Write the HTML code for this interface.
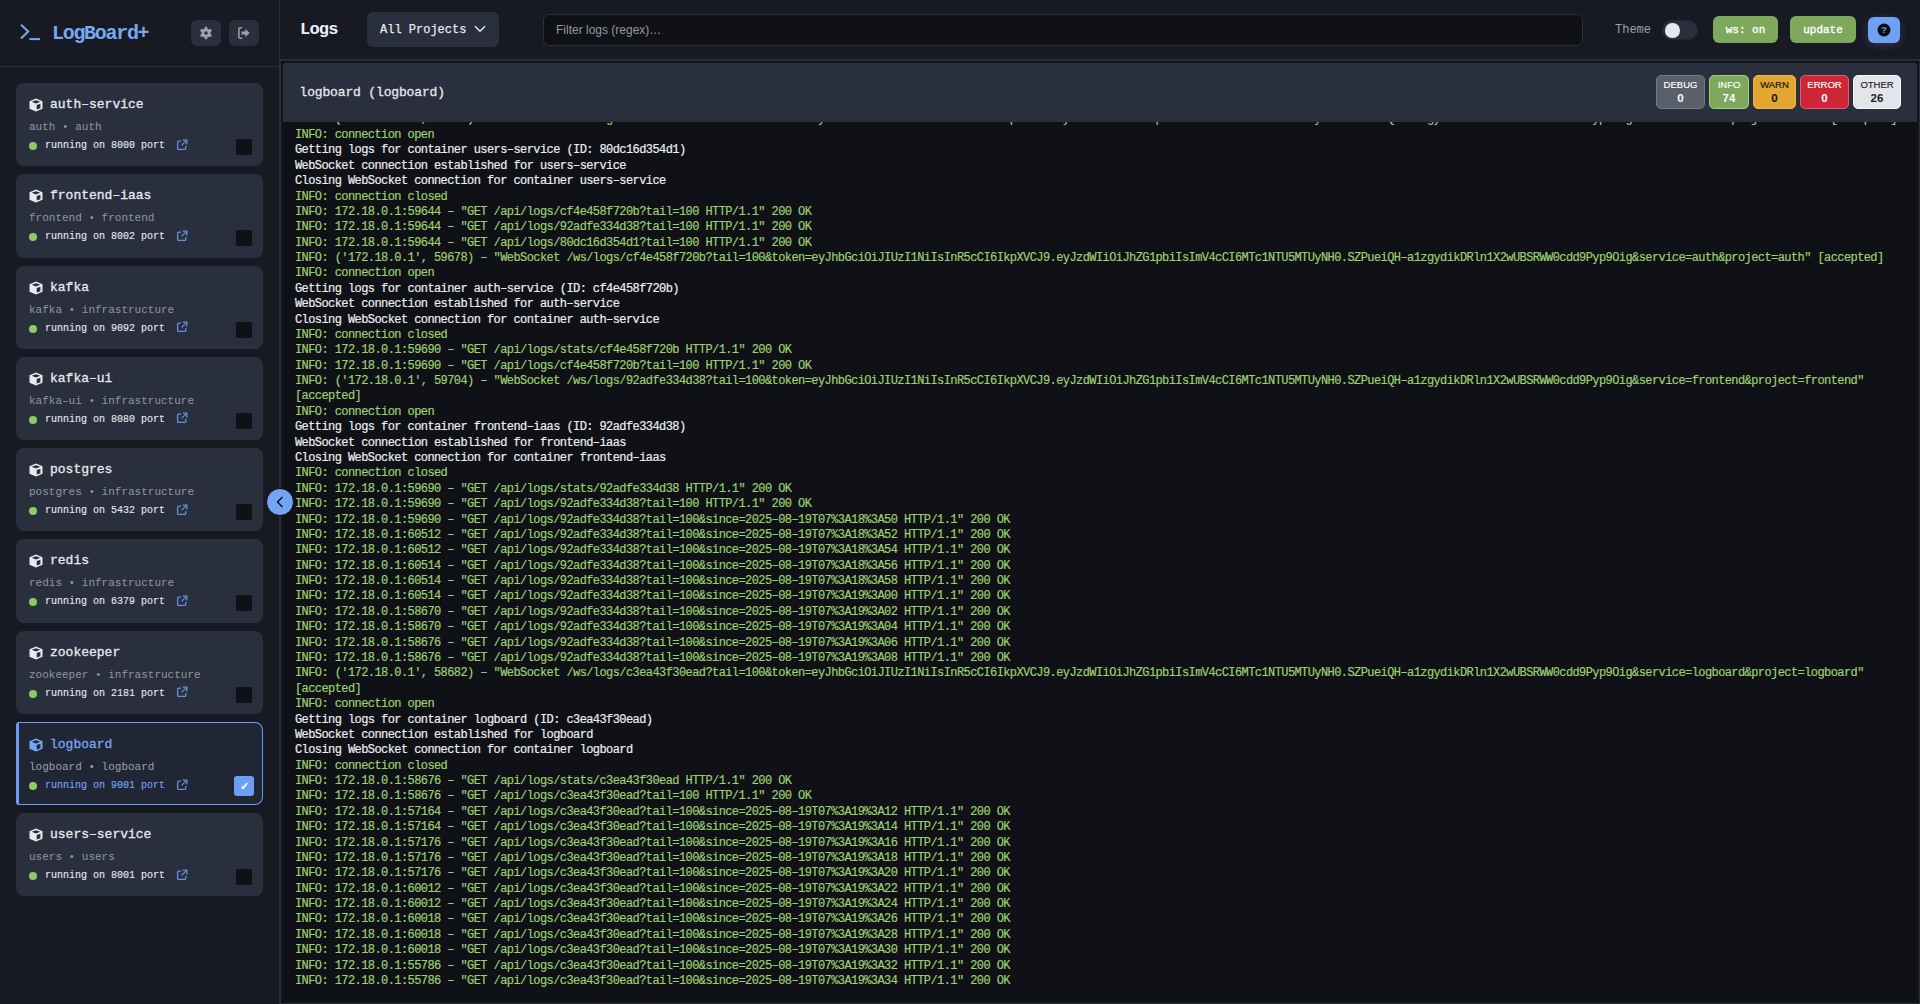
<!DOCTYPE html>
<html><head><meta charset="utf-8"><title>LogBoard+</title>
<style>
*{box-sizing:border-box;margin:0;padding:0}
html,body{width:1920px;height:1004px;overflow:hidden;background:#171a22;font-family:"Liberation Mono",monospace;color:#e6e8ec}
.sb{position:absolute;left:0;top:0;width:280px;height:1004px;background:#171a22;border-right:1px solid #2a2e39}
.sbh{position:absolute;left:0;top:0;width:279px;height:67px;border-bottom:1px solid #2a2e39}
.logo{position:absolute;left:20px;top:24px;width:21px;height:17px}
.brand{position:absolute;left:52px;top:22.5px;font-size:20px;letter-spacing:-1.3px;font-weight:bold;color:#78a8f2;line-height:22px}
.ib{position:absolute;top:20px;width:30px;height:26px;background:#2a2f3d;border-radius:6px}
.ib svg{position:absolute;left:8px;top:6px}
.card{position:absolute;left:16px;width:247px;height:83.4px;background:#2a2f3d;border-radius:8px;--cbg:#2a2f3d}
.card.sel{background:#212635;border:1px solid #6b9cf0;border-left:3px solid #6b9cf0;border-radius:3px 8px 8px 3px;--cbg:#212635}
.ct{position:absolute;left:13px;top:13px;height:18px;font-size:13px;font-weight:normal;-webkit-text-stroke:0.3px currentColor;line-height:18px;color:#e8eaee;white-space:nowrap}
.cube{position:absolute;left:-0.5px;top:2px;color:#e8eaee}
.ct span{position:absolute;left:21px;top:0}
.cs{position:absolute;left:13px;top:36px;font-size:11px;line-height:16px;color:#9096a1;white-space:nowrap}
.cr{position:absolute;left:13px;top:55px;height:15px;font-size:10px;font-weight:normal;-webkit-text-stroke:0.1px currentColor;line-height:15px;color:#e8eaee;white-space:nowrap}
.dot{position:absolute;left:-0.5px;top:4px;width:8px;height:8px;border-radius:50%;background:#8ecb66}
.rt{position:absolute;left:16px;top:0}
.ext{position:absolute;left:147px;top:0.5px;color:#5f92dc}
.chk{position:absolute;left:220px;top:56px;width:16px;height:16px;border-radius:2px;background:#0f1116}
.card.sel .ct,.card.sel .cube,.card.sel .cr{color:#76a6f4}
.card.sel .cs{color:#9aa0aa}
.card.sel .ct{left:10px;top:13px}.card.sel .cs{left:10px;top:36px}.card.sel .cr{left:10px;top:55.5px}.card.sel .chk{left:215px;top:53px}
.chk.on{background:#6c9ff2;color:#fff;font-size:11px;font-weight:bold;text-align:center;line-height:16px;font-family:"Liberation Sans",sans-serif;border-radius:3px;width:20px;height:20px;line-height:20px}
.main{position:absolute;left:280px;top:0;width:1640px;height:1004px}
.mh{position:absolute;left:0;top:0;width:1640px;height:60px;border-bottom:1px solid #2a2e39;background:#171a22}
.title{position:absolute;left:20px;top:19px;font-size:17px;letter-spacing:-0.8px;font-weight:bold;line-height:22px;color:#eef0f3}
.dd{position:absolute;left:87px;top:12px;width:132px;height:35px;background:#2a2f3d;border-radius:6px;font-size:12px;line-height:36px;color:#e6e8ec;padding-left:13px;white-space:nowrap;-webkit-text-stroke:0.25px currentColor}
.dd svg{position:absolute;left:107px;top:13px}
.filter{position:absolute;left:263px;top:14px;width:1040px;height:32px;background:#0f1116;border:1px solid #2a2e39;border-radius:6px;font-family:"Liberation Sans",sans-serif;font-size:12px;line-height:30px;color:#9299a4;padding-left:12px}
.theme{position:absolute;left:1335px;top:21px;font-size:12px;line-height:18px;color:#9aa0ab}
.tog{position:absolute;left:1382px;top:20px;width:36px;height:20px;border-radius:10px;background:#2a2f3d;border:1px solid #22262f}
.tog i{position:absolute;left:2px;top:2px;width:14.5px;height:14.5px;border-radius:50%;background:#e5e7ec}
.btn{position:absolute;top:16px;height:27px;background:#7ea85c;border-radius:6px;color:#fff;font-size:11px;font-weight:normal;-webkit-text-stroke:0.35px currentColor;line-height:28.5px;text-align:center}
.help{position:absolute;left:1588px;top:17px;width:32px;height:26px;background:#6fa1f3;border-radius:6px;box-shadow:0 2px 8px rgba(110,100,210,0.35)}
.help svg{position:absolute;left:9px;top:5.5px}
.panel{position:absolute;left:280px;top:60px;width:1640px;height:944px;border:1px solid #2a2e38;background:#0a0b0e}
.pin{position:absolute;left:0;top:0;right:0;bottom:0;border:2px solid #13161d;border-radius:5px;background:#0f1116;overflow:hidden}
.ph{position:absolute;left:0;top:0;width:100%;height:59px;background:#2a2f3e;z-index:2}
.pt{position:absolute;left:16.5px;top:20.5px;font-size:13px;letter-spacing:-0.15px;line-height:18px;color:#e6e8ec;-webkit-text-stroke:0.3px currentColor}
.badge{position:absolute;top:12px;height:34px;border-radius:5px;border:1px solid;font-family:"Liberation Sans",sans-serif;text-align:center}
.badge b{display:block;font-size:9.5px;font-weight:normal;-webkit-text-stroke:0.15px currentColor;line-height:11px;margin-top:2.5px}
.badge u{display:block;text-decoration:none;font-size:11.5px;font-weight:bold;line-height:14px;margin-top:1.5px}
.logs{position:absolute;left:12px;top:0;width:1614px;font-size:12px;letter-spacing:-0.582px;line-height:15px;z-index:1;-webkit-text-stroke:0.2px currentColor}
.logs div{position:absolute;left:0;white-space:pre;height:15px}
.logs .g{color:#9ccf72}
.logs .w{color:#eceef1}
.knob{position:absolute;left:266px;top:488px;width:28px;height:28px;border-radius:50%;background:#74a5f3;border:1px solid #0f1116;z-index:5}
.knob svg{position:absolute;left:9px;top:7px}
</style></head><body>
<div class="sb">
  <div class="sbh">
    <svg class="logo" viewBox="0 0 21 17" width="21" height="17"><path d="M1 0.8 L8.2 7.6 L1 14.4" fill="none" stroke="#78a8f2" stroke-width="2"/><path d="M9.4 15.1 H20" stroke="#78a8f2" stroke-width="2"/></svg>
    <div class="brand">LogBoard+</div>
    <div class="ib" style="left:191px"><svg viewBox="0 0 14 14" width="14" height="14"><g fill="#9ea4b1"><circle cx="7" cy="7" r="4.6"/><rect x="5.7" y="0.8" width="2.6" height="12.4" rx="0.6"/><rect x="5.7" y="0.8" width="2.6" height="12.4" rx="0.6" transform="rotate(60 7 7)"/><rect x="5.7" y="0.8" width="2.6" height="12.4" rx="0.6" transform="rotate(120 7 7)"/></g><circle cx="7" cy="7" r="1.7" fill="#2a2f3d"/></svg></div>
    <div class="ib" style="left:229px"><svg viewBox="0 0 14 14" width="14" height="14"><path d="M4.6 1.8 H3.2 Q1.9 1.8 1.9 3.1 V10.9 Q1.9 12.2 3.2 12.2 H4.6" fill="none" stroke="#9ea4b1" stroke-width="1.5" stroke-linecap="round"/><path d="M4.6 5.6 H8.4 V3 L12.6 7 L8.4 11 V8.4 H4.6 Z" fill="#9ea4b1"/></svg></div>
  </div>
<div class="card" style="top:83.0px">
<div class="ct"><svg class="cube" viewBox="0 0 14 14" width="14" height="14"><path d="M7 0.5 L13.5 3.3 V10.7 L7 13.5 L0.5 10.7 V3.3 Z" fill="currentColor"/><path d="M2.7 3.8 L7 2.2 L11.3 3.8 L7 5.5 Z" fill="var(--cbg)"/><path d="M7.7 7.1 L11.4 5.7 V10.2 L7.7 11.6 Z" fill="var(--cbg)"/></svg><span>auth–service</span></div>
<div class="cs">auth • auth</div>
<div class="cr"><span class="dot"></span><span class="rt">running on 8000 port</span><svg class="ext" viewBox="0 0 12 12" width="12" height="12"><path d="M5 2.2 H2.6 Q1.6 2.2 1.6 3.2 V9.4 Q1.6 10.4 2.6 10.4 H8.8 Q9.8 10.4 9.8 9.4 V7" fill="none" stroke="currentColor" stroke-width="1.3"/><path d="M6.6 1.2 H10.8 V5.4" fill="none" stroke="currentColor" stroke-width="1.3"/><path d="M10.6 1.4 L5.6 6.4" stroke="currentColor" stroke-width="1.3"/></svg></div>
<div class="chk"></div>
</div>
<div class="card" style="top:174.2px">
<div class="ct"><svg class="cube" viewBox="0 0 14 14" width="14" height="14"><path d="M7 0.5 L13.5 3.3 V10.7 L7 13.5 L0.5 10.7 V3.3 Z" fill="currentColor"/><path d="M2.7 3.8 L7 2.2 L11.3 3.8 L7 5.5 Z" fill="var(--cbg)"/><path d="M7.7 7.1 L11.4 5.7 V10.2 L7.7 11.6 Z" fill="var(--cbg)"/></svg><span>frontend–iaas</span></div>
<div class="cs">frontend • frontend</div>
<div class="cr"><span class="dot"></span><span class="rt">running on 8002 port</span><svg class="ext" viewBox="0 0 12 12" width="12" height="12"><path d="M5 2.2 H2.6 Q1.6 2.2 1.6 3.2 V9.4 Q1.6 10.4 2.6 10.4 H8.8 Q9.8 10.4 9.8 9.4 V7" fill="none" stroke="currentColor" stroke-width="1.3"/><path d="M6.6 1.2 H10.8 V5.4" fill="none" stroke="currentColor" stroke-width="1.3"/><path d="M10.6 1.4 L5.6 6.4" stroke="currentColor" stroke-width="1.3"/></svg></div>
<div class="chk"></div>
</div>
<div class="card" style="top:265.5px">
<div class="ct"><svg class="cube" viewBox="0 0 14 14" width="14" height="14"><path d="M7 0.5 L13.5 3.3 V10.7 L7 13.5 L0.5 10.7 V3.3 Z" fill="currentColor"/><path d="M2.7 3.8 L7 2.2 L11.3 3.8 L7 5.5 Z" fill="var(--cbg)"/><path d="M7.7 7.1 L11.4 5.7 V10.2 L7.7 11.6 Z" fill="var(--cbg)"/></svg><span>kafka</span></div>
<div class="cs">kafka • infrastructure</div>
<div class="cr"><span class="dot"></span><span class="rt">running on 9092 port</span><svg class="ext" viewBox="0 0 12 12" width="12" height="12"><path d="M5 2.2 H2.6 Q1.6 2.2 1.6 3.2 V9.4 Q1.6 10.4 2.6 10.4 H8.8 Q9.8 10.4 9.8 9.4 V7" fill="none" stroke="currentColor" stroke-width="1.3"/><path d="M6.6 1.2 H10.8 V5.4" fill="none" stroke="currentColor" stroke-width="1.3"/><path d="M10.6 1.4 L5.6 6.4" stroke="currentColor" stroke-width="1.3"/></svg></div>
<div class="chk"></div>
</div>
<div class="card" style="top:356.8px">
<div class="ct"><svg class="cube" viewBox="0 0 14 14" width="14" height="14"><path d="M7 0.5 L13.5 3.3 V10.7 L7 13.5 L0.5 10.7 V3.3 Z" fill="currentColor"/><path d="M2.7 3.8 L7 2.2 L11.3 3.8 L7 5.5 Z" fill="var(--cbg)"/><path d="M7.7 7.1 L11.4 5.7 V10.2 L7.7 11.6 Z" fill="var(--cbg)"/></svg><span>kafka–ui</span></div>
<div class="cs">kafka–ui • infrastructure</div>
<div class="cr"><span class="dot"></span><span class="rt">running on 8080 port</span><svg class="ext" viewBox="0 0 12 12" width="12" height="12"><path d="M5 2.2 H2.6 Q1.6 2.2 1.6 3.2 V9.4 Q1.6 10.4 2.6 10.4 H8.8 Q9.8 10.4 9.8 9.4 V7" fill="none" stroke="currentColor" stroke-width="1.3"/><path d="M6.6 1.2 H10.8 V5.4" fill="none" stroke="currentColor" stroke-width="1.3"/><path d="M10.6 1.4 L5.6 6.4" stroke="currentColor" stroke-width="1.3"/></svg></div>
<div class="chk"></div>
</div>
<div class="card" style="top:448.0px">
<div class="ct"><svg class="cube" viewBox="0 0 14 14" width="14" height="14"><path d="M7 0.5 L13.5 3.3 V10.7 L7 13.5 L0.5 10.7 V3.3 Z" fill="currentColor"/><path d="M2.7 3.8 L7 2.2 L11.3 3.8 L7 5.5 Z" fill="var(--cbg)"/><path d="M7.7 7.1 L11.4 5.7 V10.2 L7.7 11.6 Z" fill="var(--cbg)"/></svg><span>postgres</span></div>
<div class="cs">postgres • infrastructure</div>
<div class="cr"><span class="dot"></span><span class="rt">running on 5432 port</span><svg class="ext" viewBox="0 0 12 12" width="12" height="12"><path d="M5 2.2 H2.6 Q1.6 2.2 1.6 3.2 V9.4 Q1.6 10.4 2.6 10.4 H8.8 Q9.8 10.4 9.8 9.4 V7" fill="none" stroke="currentColor" stroke-width="1.3"/><path d="M6.6 1.2 H10.8 V5.4" fill="none" stroke="currentColor" stroke-width="1.3"/><path d="M10.6 1.4 L5.6 6.4" stroke="currentColor" stroke-width="1.3"/></svg></div>
<div class="chk"></div>
</div>
<div class="card" style="top:539.2px">
<div class="ct"><svg class="cube" viewBox="0 0 14 14" width="14" height="14"><path d="M7 0.5 L13.5 3.3 V10.7 L7 13.5 L0.5 10.7 V3.3 Z" fill="currentColor"/><path d="M2.7 3.8 L7 2.2 L11.3 3.8 L7 5.5 Z" fill="var(--cbg)"/><path d="M7.7 7.1 L11.4 5.7 V10.2 L7.7 11.6 Z" fill="var(--cbg)"/></svg><span>redis</span></div>
<div class="cs">redis • infrastructure</div>
<div class="cr"><span class="dot"></span><span class="rt">running on 6379 port</span><svg class="ext" viewBox="0 0 12 12" width="12" height="12"><path d="M5 2.2 H2.6 Q1.6 2.2 1.6 3.2 V9.4 Q1.6 10.4 2.6 10.4 H8.8 Q9.8 10.4 9.8 9.4 V7" fill="none" stroke="currentColor" stroke-width="1.3"/><path d="M6.6 1.2 H10.8 V5.4" fill="none" stroke="currentColor" stroke-width="1.3"/><path d="M10.6 1.4 L5.6 6.4" stroke="currentColor" stroke-width="1.3"/></svg></div>
<div class="chk"></div>
</div>
<div class="card" style="top:630.5px">
<div class="ct"><svg class="cube" viewBox="0 0 14 14" width="14" height="14"><path d="M7 0.5 L13.5 3.3 V10.7 L7 13.5 L0.5 10.7 V3.3 Z" fill="currentColor"/><path d="M2.7 3.8 L7 2.2 L11.3 3.8 L7 5.5 Z" fill="var(--cbg)"/><path d="M7.7 7.1 L11.4 5.7 V10.2 L7.7 11.6 Z" fill="var(--cbg)"/></svg><span>zookeeper</span></div>
<div class="cs">zookeeper • infrastructure</div>
<div class="cr"><span class="dot"></span><span class="rt">running on 2181 port</span><svg class="ext" viewBox="0 0 12 12" width="12" height="12"><path d="M5 2.2 H2.6 Q1.6 2.2 1.6 3.2 V9.4 Q1.6 10.4 2.6 10.4 H8.8 Q9.8 10.4 9.8 9.4 V7" fill="none" stroke="currentColor" stroke-width="1.3"/><path d="M6.6 1.2 H10.8 V5.4" fill="none" stroke="currentColor" stroke-width="1.3"/><path d="M10.6 1.4 L5.6 6.4" stroke="currentColor" stroke-width="1.3"/></svg></div>
<div class="chk"></div>
</div>
<div class="card sel" style="top:721.8px">
<div class="ct"><svg class="cube" viewBox="0 0 14 14" width="14" height="14"><path d="M7 0.5 L13.5 3.3 V10.7 L7 13.5 L0.5 10.7 V3.3 Z" fill="currentColor"/><path d="M2.7 3.8 L7 2.2 L11.3 3.8 L7 5.5 Z" fill="var(--cbg)"/><path d="M7.7 7.1 L11.4 5.7 V10.2 L7.7 11.6 Z" fill="var(--cbg)"/></svg><span>logboard</span></div>
<div class="cs">logboard • logboard</div>
<div class="cr"><span class="dot"></span><span class="rt">running on 9001 port</span><svg class="ext" viewBox="0 0 12 12" width="12" height="12"><path d="M5 2.2 H2.6 Q1.6 2.2 1.6 3.2 V9.4 Q1.6 10.4 2.6 10.4 H8.8 Q9.8 10.4 9.8 9.4 V7" fill="none" stroke="currentColor" stroke-width="1.3"/><path d="M6.6 1.2 H10.8 V5.4" fill="none" stroke="currentColor" stroke-width="1.3"/><path d="M10.6 1.4 L5.6 6.4" stroke="currentColor" stroke-width="1.3"/></svg></div>
<div class="chk on">✓</div>
</div>
<div class="card" style="top:813.0px">
<div class="ct"><svg class="cube" viewBox="0 0 14 14" width="14" height="14"><path d="M7 0.5 L13.5 3.3 V10.7 L7 13.5 L0.5 10.7 V3.3 Z" fill="currentColor"/><path d="M2.7 3.8 L7 2.2 L11.3 3.8 L7 5.5 Z" fill="var(--cbg)"/><path d="M7.7 7.1 L11.4 5.7 V10.2 L7.7 11.6 Z" fill="var(--cbg)"/></svg><span>users–service</span></div>
<div class="cs">users • users</div>
<div class="cr"><span class="dot"></span><span class="rt">running on 8001 port</span><svg class="ext" viewBox="0 0 12 12" width="12" height="12"><path d="M5 2.2 H2.6 Q1.6 2.2 1.6 3.2 V9.4 Q1.6 10.4 2.6 10.4 H8.8 Q9.8 10.4 9.8 9.4 V7" fill="none" stroke="currentColor" stroke-width="1.3"/><path d="M6.6 1.2 H10.8 V5.4" fill="none" stroke="currentColor" stroke-width="1.3"/><path d="M10.6 1.4 L5.6 6.4" stroke="currentColor" stroke-width="1.3"/></svg></div>
<div class="chk"></div>
</div>

</div>
<div class="main">
  <div class="mh">
    <div class="title">Logs</div>
    <div class="dd">All Projects<svg viewBox="0 0 12 8" width="12" height="8"><path d="M1 1.2 L6 6.2 L11 1.2" fill="none" stroke="#e6e8ec" stroke-width="1.5"/></svg></div>
    <div class="filter">Filter logs (regex)…</div>
    <div class="theme">Theme</div>
    <div class="tog"><i></i></div>
    <div class="btn" style="left:1433px;width:65px">ws: on</div>
    <div class="btn" style="left:1510px;width:66px">update</div>
    <div class="help"><svg viewBox="0 0 14 14" width="14" height="14"><circle cx="7" cy="7" r="6.5" fill="#0b0d12"/><text x="7" y="10.3" font-family="Liberation Sans" font-weight="bold" font-size="9.5" fill="#6fa1f3" text-anchor="middle">?</text></svg></div>
  </div>
</div>
<div class="panel"><div class="pin">
  <div class="ph">
    <div class="pt">logboard (logboard)</div>
    <div class="badge" style="left:1373px;width:49px;background:#5a606a;border-color:#737983;color:#fff"><b>DEBUG</b><u>0</u></div>
    <div class="badge" style="left:1426px;width:40px;background:#7ea85c;border-color:#9bd477;color:#fff"><b>INFO</b><u>74</u></div>
    <div class="badge" style="left:1470px;width:43px;background:#e3a630;border-color:#f0b848;color:#111"><b>WARN</b><u>0</u></div>
    <div class="badge" style="left:1517px;width:49px;background:#cf2637;border-color:#ef5a68;color:#fff"><b>ERROR</b><u>0</u></div>
    <div class="badge" style="left:1570px;width:48px;background:#e2e5ea;border-color:#f4f5f7;color:#222"><b>OTHER</b><u>26</u></div>
  </div>
  <div class="logs" style="top:0">
<div class="g" style="top:49px">INFO: ('172.18.0.1', 59660) – "WebSocket /ws/logs/80dc16d354d1?tail=100&amp;token=eyJhbGciOiJIUzI1NiIsInR5cCI6IkpXVCJ9.eyJzdWIiOiJhZG1pbiIsImV4cCI6MTc1NTU5MTUyNH0.SZPueiQH–a1zgydikDRln1X2wUBSRWW0cdd9Pyp9Oig&amp;service=users&amp;project=users" [accepted]</div>
<div class="g" style="top:65px">INFO: connection open</div>
<div class="w" style="top:80px">Getting logs for container users–service (ID: 80dc16d354d1)</div>
<div class="w" style="top:96px">WebSocket connection established for users–service</div>
<div class="w" style="top:111px">Closing WebSocket connection for container users–service</div>
<div class="g" style="top:127px">INFO: connection closed</div>
<div class="g" style="top:142px">INFO: 172.18.0.1:59644 – "GET /api/logs/cf4e458f720b?tail=100 HTTP/1.1" 200 OK</div>
<div class="g" style="top:157px">INFO: 172.18.0.1:59644 – "GET /api/logs/92adfe334d38?tail=100 HTTP/1.1" 200 OK</div>
<div class="g" style="top:173px">INFO: 172.18.0.1:59644 – "GET /api/logs/80dc16d354d1?tail=100 HTTP/1.1" 200 OK</div>
<div class="g" style="top:188px">INFO: ('172.18.0.1', 59678) – "WebSocket /ws/logs/cf4e458f720b?tail=100&amp;token=eyJhbGciOiJIUzI1NiIsInR5cCI6IkpXVCJ9.eyJzdWIiOiJhZG1pbiIsImV4cCI6MTc1NTU5MTUyNH0.SZPueiQH–a1zgydikDRln1X2wUBSRWW0cdd9Pyp9Oig&amp;service=auth&amp;project=auth" [accepted]</div>
<div class="g" style="top:203px">INFO: connection open</div>
<div class="w" style="top:219px">Getting logs for container auth–service (ID: cf4e458f720b)</div>
<div class="w" style="top:234px">WebSocket connection established for auth–service</div>
<div class="w" style="top:250px">Closing WebSocket connection for container auth–service</div>
<div class="g" style="top:265px">INFO: connection closed</div>
<div class="g" style="top:280px">INFO: 172.18.0.1:59690 – "GET /api/logs/stats/cf4e458f720b HTTP/1.1" 200 OK</div>
<div class="g" style="top:296px">INFO: 172.18.0.1:59690 – "GET /api/logs/cf4e458f720b?tail=100 HTTP/1.1" 200 OK</div>
<div class="g" style="top:311px">INFO: ('172.18.0.1', 59704) – "WebSocket /ws/logs/92adfe334d38?tail=100&amp;token=eyJhbGciOiJIUzI1NiIsInR5cCI6IkpXVCJ9.eyJzdWIiOiJhZG1pbiIsImV4cCI6MTc1NTU5MTUyNH0.SZPueiQH–a1zgydikDRln1X2wUBSRWW0cdd9Pyp9Oig&amp;service=frontend&amp;project=frontend"</div>
<div class="g" style="top:326px">[accepted]</div>
<div class="g" style="top:342px">INFO: connection open</div>
<div class="w" style="top:357px">Getting logs for container frontend–iaas (ID: 92adfe334d38)</div>
<div class="w" style="top:373px">WebSocket connection established for frontend–iaas</div>
<div class="w" style="top:388px">Closing WebSocket connection for container frontend–iaas</div>
<div class="g" style="top:403px">INFO: connection closed</div>
<div class="g" style="top:419px">INFO: 172.18.0.1:59690 – "GET /api/logs/stats/92adfe334d38 HTTP/1.1" 200 OK</div>
<div class="g" style="top:434px">INFO: 172.18.0.1:59690 – "GET /api/logs/92adfe334d38?tail=100 HTTP/1.1" 200 OK</div>
<div class="g" style="top:450px">INFO: 172.18.0.1:59690 – "GET /api/logs/92adfe334d38?tail=100&amp;since=2025–08–19T07%3A18%3A50 HTTP/1.1" 200 OK</div>
<div class="g" style="top:465px">INFO: 172.18.0.1:60512 – "GET /api/logs/92adfe334d38?tail=100&amp;since=2025–08–19T07%3A18%3A52 HTTP/1.1" 200 OK</div>
<div class="g" style="top:480px">INFO: 172.18.0.1:60512 – "GET /api/logs/92adfe334d38?tail=100&amp;since=2025–08–19T07%3A18%3A54 HTTP/1.1" 200 OK</div>
<div class="g" style="top:496px">INFO: 172.18.0.1:60514 – "GET /api/logs/92adfe334d38?tail=100&amp;since=2025–08–19T07%3A18%3A56 HTTP/1.1" 200 OK</div>
<div class="g" style="top:511px">INFO: 172.18.0.1:60514 – "GET /api/logs/92adfe334d38?tail=100&amp;since=2025–08–19T07%3A18%3A58 HTTP/1.1" 200 OK</div>
<div class="g" style="top:526px">INFO: 172.18.0.1:60514 – "GET /api/logs/92adfe334d38?tail=100&amp;since=2025–08–19T07%3A19%3A00 HTTP/1.1" 200 OK</div>
<div class="g" style="top:542px">INFO: 172.18.0.1:58670 – "GET /api/logs/92adfe334d38?tail=100&amp;since=2025–08–19T07%3A19%3A02 HTTP/1.1" 200 OK</div>
<div class="g" style="top:557px">INFO: 172.18.0.1:58670 – "GET /api/logs/92adfe334d38?tail=100&amp;since=2025–08–19T07%3A19%3A04 HTTP/1.1" 200 OK</div>
<div class="g" style="top:573px">INFO: 172.18.0.1:58676 – "GET /api/logs/92adfe334d38?tail=100&amp;since=2025–08–19T07%3A19%3A06 HTTP/1.1" 200 OK</div>
<div class="g" style="top:588px">INFO: 172.18.0.1:58676 – "GET /api/logs/92adfe334d38?tail=100&amp;since=2025–08–19T07%3A19%3A08 HTTP/1.1" 200 OK</div>
<div class="g" style="top:603px">INFO: ('172.18.0.1', 58682) – "WebSocket /ws/logs/c3ea43f30ead?tail=100&amp;token=eyJhbGciOiJIUzI1NiIsInR5cCI6IkpXVCJ9.eyJzdWIiOiJhZG1pbiIsImV4cCI6MTc1NTU5MTUyNH0.SZPueiQH–a1zgydikDRln1X2wUBSRWW0cdd9Pyp9Oig&amp;service=logboard&amp;project=logboard"</div>
<div class="g" style="top:619px">[accepted]</div>
<div class="g" style="top:634px">INFO: connection open</div>
<div class="w" style="top:650px">Getting logs for container logboard (ID: c3ea43f30ead)</div>
<div class="w" style="top:665px">WebSocket connection established for logboard</div>
<div class="w" style="top:680px">Closing WebSocket connection for container logboard</div>
<div class="g" style="top:696px">INFO: connection closed</div>
<div class="g" style="top:711px">INFO: 172.18.0.1:58676 – "GET /api/logs/stats/c3ea43f30ead HTTP/1.1" 200 OK</div>
<div class="g" style="top:726px">INFO: 172.18.0.1:58676 – "GET /api/logs/c3ea43f30ead?tail=100 HTTP/1.1" 200 OK</div>
<div class="g" style="top:742px">INFO: 172.18.0.1:57164 – "GET /api/logs/c3ea43f30ead?tail=100&amp;since=2025–08–19T07%3A19%3A12 HTTP/1.1" 200 OK</div>
<div class="g" style="top:757px">INFO: 172.18.0.1:57164 – "GET /api/logs/c3ea43f30ead?tail=100&amp;since=2025–08–19T07%3A19%3A14 HTTP/1.1" 200 OK</div>
<div class="g" style="top:773px">INFO: 172.18.0.1:57176 – "GET /api/logs/c3ea43f30ead?tail=100&amp;since=2025–08–19T07%3A19%3A16 HTTP/1.1" 200 OK</div>
<div class="g" style="top:788px">INFO: 172.18.0.1:57176 – "GET /api/logs/c3ea43f30ead?tail=100&amp;since=2025–08–19T07%3A19%3A18 HTTP/1.1" 200 OK</div>
<div class="g" style="top:803px">INFO: 172.18.0.1:57176 – "GET /api/logs/c3ea43f30ead?tail=100&amp;since=2025–08–19T07%3A19%3A20 HTTP/1.1" 200 OK</div>
<div class="g" style="top:819px">INFO: 172.18.0.1:60012 – "GET /api/logs/c3ea43f30ead?tail=100&amp;since=2025–08–19T07%3A19%3A22 HTTP/1.1" 200 OK</div>
<div class="g" style="top:834px">INFO: 172.18.0.1:60012 – "GET /api/logs/c3ea43f30ead?tail=100&amp;since=2025–08–19T07%3A19%3A24 HTTP/1.1" 200 OK</div>
<div class="g" style="top:849px">INFO: 172.18.0.1:60018 – "GET /api/logs/c3ea43f30ead?tail=100&amp;since=2025–08–19T07%3A19%3A26 HTTP/1.1" 200 OK</div>
<div class="g" style="top:865px">INFO: 172.18.0.1:60018 – "GET /api/logs/c3ea43f30ead?tail=100&amp;since=2025–08–19T07%3A19%3A28 HTTP/1.1" 200 OK</div>
<div class="g" style="top:880px">INFO: 172.18.0.1:60018 – "GET /api/logs/c3ea43f30ead?tail=100&amp;since=2025–08–19T07%3A19%3A30 HTTP/1.1" 200 OK</div>
<div class="g" style="top:896px">INFO: 172.18.0.1:55786 – "GET /api/logs/c3ea43f30ead?tail=100&amp;since=2025–08–19T07%3A19%3A32 HTTP/1.1" 200 OK</div>
<div class="g" style="top:911px">INFO: 172.18.0.1:55786 – "GET /api/logs/c3ea43f30ead?tail=100&amp;since=2025–08–19T07%3A19%3A34 HTTP/1.1" 200 OK</div>

  </div>
</div></div>
<div class="knob"><svg viewBox="0 0 8 12" width="8" height="12"><path d="M6.5 1 L1.5 6 L6.5 11" fill="none" stroke="#0b0d12" stroke-width="1.4"/></svg></div>
</body></html>
